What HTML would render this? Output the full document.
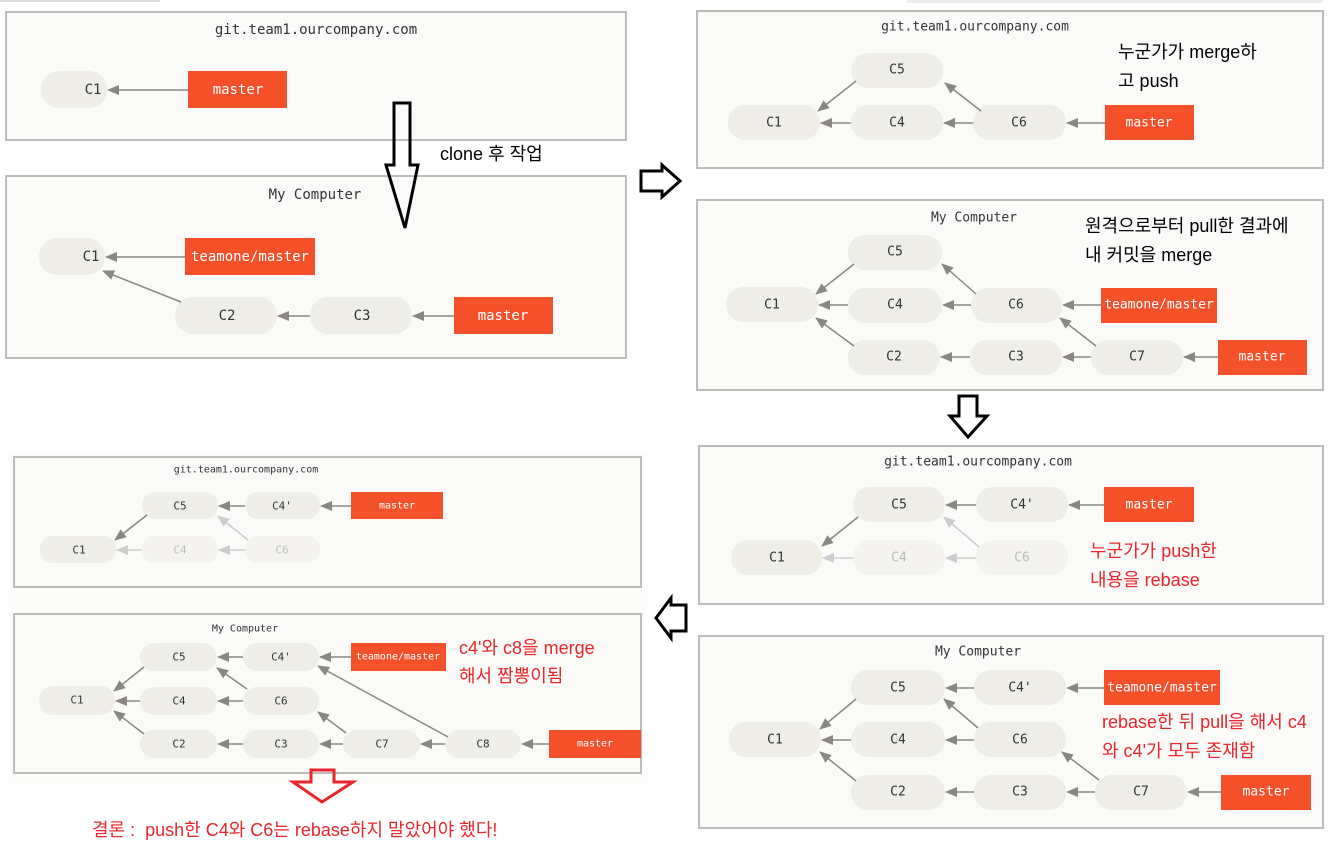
<!DOCTYPE html><html><head><meta charset="utf-8"><style>
html,body{margin:0;padding:0;background:#fff;width:1335px;height:860px;overflow:hidden}
svg{display:block}
.p{fill:#fafaf8;stroke:#bdbcb8;stroke-width:2}
.n{fill:#eeede7}
.f{fill:#f4f3ef}
.o{fill:#f4502a}
.t{font-family:"DejaVu Sans Mono","Liberation Mono",monospace;fill:#333;text-anchor:middle;dominant-baseline:central}
.w{font-family:"DejaVu Sans Mono","Liberation Mono",monospace;fill:#fff;text-anchor:middle;dominant-baseline:central}
.l{stroke:#8a8782;stroke-width:1.5;marker-end:url(#a)}
.lf{stroke:#ccc;stroke-width:1.5;marker-end:url(#b)}
.k{font-family:"Liberation Sans","Noto Sans CJK KR",sans-serif;font-size:18px;white-space:pre}
</style></head><body>
<svg width="1335" height="860" xmlns="http://www.w3.org/2000/svg">
<defs>
<marker id="a" markerUnits="userSpaceOnUse" markerWidth="12" markerHeight="10" refX="11" refY="5" orient="auto"><path d="M0,0 L12,5 L0,10 Z" fill="#8a8782"/></marker>
<marker id="b" markerUnits="userSpaceOnUse" markerWidth="12" markerHeight="10" refX="11" refY="5" orient="auto"><path d="M0,0 L12,5 L0,10 Z" fill="#ccc"/></marker>
</defs>
<rect x="0" y="0" width="160" height="2" fill="#ddd"/>
<rect x="907" y="0" width="416" height="3" fill="#eee"/>

<!-- P1 -->
<rect class="p" x="6" y="12" width="620" height="128"/>
<text class="t" x="316" y="30" font-size="14">git.team1.ourcompany.com</text>
<rect class="n" x="41" y="71" width="66" height="37" rx="18"/><text class="t" x="93" y="90" font-size="14">C1</text>
<rect class="o" x="188" y="71" width="99" height="37"/><text class="w" x="238" y="90" font-size="14">master</text>
<line class="l" x1="188" y1="90" x2="108" y2="90"/>

<!-- P2 -->
<rect class="p" x="6" y="176" width="620" height="182"/>
<text class="t" x="315" y="195" font-size="14">My Computer</text>
<rect class="n" x="39" y="238" width="66" height="37" rx="18"/><text class="t" x="91" y="257" font-size="14">C1</text>
<rect class="o" x="185" y="238" width="130" height="37"/><text class="w" x="250" y="257" font-size="14">teamone/master</text>
<rect class="n" x="175" y="297" width="102" height="37" rx="18"/><text class="t" x="227" y="316" font-size="14">C2</text>
<rect class="n" x="310" y="297" width="102" height="37" rx="18"/><text class="t" x="362" y="316" font-size="14">C3</text>
<rect class="o" x="454" y="297" width="99" height="37"/><text class="w" x="503" y="316" font-size="14">master</text>
<line class="l" x1="185" y1="257" x2="106" y2="257"/>
<line class="l" x1="181" y1="302" x2="103" y2="271"/>
<line class="l" x1="310" y1="316" x2="278" y2="316"/>
<line class="l" x1="454" y1="316" x2="413" y2="316"/>

<!-- big down arrow -->
<path d="M394,103 L410,103 L410,165 L418,165 L405,228 L386,165 L394,165 Z" fill="none" stroke="#000" stroke-width="3"/>
<text class="k" x="440" y="160" fill="#000" font-size="16">clone 후 작업</text>
<!-- right arrow -->
<path d="M641,171 L662,171 L662,165 L680,181 L662,197 L662,191 L641,191 Z" fill="none" stroke="#000" stroke-width="3"/>

<!-- P3 -->
<rect class="p" x="697" y="11" width="626" height="157"/>
<text class="t" x="975" y="27" font-size="13">git.team1.ourcompany.com</text>
<rect class="n" x="851" y="53" width="92" height="35" rx="17"/><text class="t" x="897" y="70" font-size="13">C5</text>
<rect class="n" x="728" y="105" width="92" height="35" rx="17"/><text class="t" x="774" y="123" font-size="13">C1</text>
<rect class="n" x="851" y="105" width="92" height="35" rx="17"/><text class="t" x="897" y="123" font-size="13">C4</text>
<rect class="n" x="973" y="105" width="93" height="35" rx="17"/><text class="t" x="1019" y="123" font-size="13">C6</text>
<rect class="o" x="1105" y="105" width="89" height="35"/><text class="w" x="1149" y="123" font-size="13">master</text>
<line class="l" x1="856" y1="81" x2="818" y2="111"/>
<line class="l" x1="851" y1="123" x2="821" y2="123"/>
<line class="l" x1="973" y1="123" x2="944" y2="123"/>
<line class="l" x1="981" y1="111" x2="945" y2="83"/>
<line class="l" x1="1105" y1="123" x2="1067" y2="123"/>
<text class="k" x="1118" y="58" fill="#000">누군가가 merge하</text>
<text class="k" x="1118" y="87" fill="#000">고 push</text>

<!-- P4 -->
<rect class="p" x="697" y="200" width="626" height="190"/>
<text class="t" x="974" y="218" font-size="13">My Computer</text>
<rect class="n" x="848" y="235" width="94" height="35" rx="17"/><text class="t" x="895" y="252" font-size="13">C5</text>
<rect class="n" x="726" y="287" width="92" height="35" rx="17"/><text class="t" x="772" y="305" font-size="13">C1</text>
<rect class="n" x="848" y="288" width="94" height="35" rx="17"/><text class="t" x="895" y="305" font-size="13">C4</text>
<rect class="n" x="971" y="288" width="91" height="35" rx="17"/><text class="t" x="1016" y="305" font-size="13">C6</text>
<rect class="o" x="1101" y="288" width="116" height="35"/><text class="w" x="1159" y="305" font-size="13">teamone/master</text>
<rect class="n" x="848" y="340" width="92" height="35" rx="17"/><text class="t" x="894" y="357" font-size="13">C2</text>
<rect class="n" x="970" y="340" width="92" height="35" rx="17"/><text class="t" x="1016" y="357" font-size="13">C3</text>
<rect class="n" x="1091" y="340" width="92" height="35" rx="17"/><text class="t" x="1137" y="357" font-size="13">C7</text>
<rect class="o" x="1218" y="340" width="89" height="35"/><text class="w" x="1262" y="357" font-size="13">master</text>
<line class="l" x1="854" y1="264" x2="816" y2="294"/>
<line class="l" x1="848" y1="305" x2="819" y2="305"/>
<line class="l" x1="854" y1="346" x2="816" y2="318"/>
<line class="l" x1="971" y1="305" x2="943" y2="305"/>
<line class="l" x1="976" y1="294" x2="942" y2="264"/>
<line class="l" x1="1101" y1="305" x2="1063" y2="305"/>
<line class="l" x1="970" y1="357" x2="941" y2="357"/>
<line class="l" x1="1091" y1="357" x2="1063" y2="357"/>
<line class="l" x1="1096" y1="346" x2="1060" y2="318"/>
<line class="l" x1="1218" y1="357" x2="1184" y2="357"/>
<text class="k" x="1085" y="232" fill="#000">원격으로부터 pull한 결과에</text>
<text class="k" x="1085" y="261" fill="#000">내 커밋을 merge</text>

<!-- down arrow small -->
<path d="M959,396 L977,396 L977,416 L987,416 L968,437 L950,416 L959,416 Z" fill="none" stroke="#000" stroke-width="3"/>

<!-- P5 -->
<rect class="p" x="699" y="446" width="624" height="158"/>
<text class="t" x="978" y="462" font-size="13">git.team1.ourcompany.com</text>
<rect class="n" x="853" y="487" width="92" height="35" rx="17"/><text class="t" x="899" y="505" font-size="13">C5</text>
<rect class="n" x="976" y="487" width="92" height="35" rx="17"/><text class="t" x="1022" y="505" font-size="13">C4'</text>
<rect class="o" x="1104" y="487" width="90" height="35"/><text class="w" x="1149" y="505" font-size="13">master</text>
<rect class="n" x="731" y="540" width="91" height="35" rx="17"/><text class="t" x="777" y="558" font-size="13">C1</text>
<rect class="f" x="853" y="540" width="92" height="35" rx="17"/><text class="t" x="899" y="558" font-size="13" style="fill:#bbb">C4</text>
<rect class="f" x="976" y="540" width="92" height="35" rx="17"/><text class="t" x="1022" y="558" font-size="13" style="fill:#bbb">C6</text>
<line class="l" x1="858" y1="517" x2="822" y2="546"/>
<line class="l" x1="976" y1="505" x2="946" y2="505"/>
<line class="l" x1="1104" y1="505" x2="1069" y2="505"/>
<line class="lf" x1="853" y1="558" x2="823" y2="558"/>
<line class="lf" x1="976" y1="558" x2="946" y2="558"/>
<line class="lf" x1="979" y1="547" x2="944" y2="517"/>
<text class="k" x="1090" y="557" fill="#e8262b">누군가가 push한</text>
<text class="k" x="1090" y="586" fill="#e8262b">내용을 rebase</text>

<!-- P6 -->
<rect class="p" x="699" y="636" width="624" height="192"/>
<text class="t" x="978" y="652" font-size="13">My Computer</text>
<rect class="n" x="851" y="670" width="94" height="35" rx="17"/><text class="t" x="898" y="688" font-size="13">C5</text>
<rect class="n" x="974" y="670" width="92" height="35" rx="17"/><text class="t" x="1020" y="688" font-size="13">C4'</text>
<rect class="o" x="1104" y="670" width="116" height="35"/><text class="w" x="1162" y="688" font-size="13">teamone/master</text>
<rect class="n" x="729" y="722" width="92" height="35" rx="17"/><text class="t" x="775" y="740" font-size="13">C1</text>
<rect class="n" x="851" y="722" width="94" height="35" rx="17"/><text class="t" x="898" y="740" font-size="13">C4</text>
<rect class="n" x="974" y="722" width="92" height="35" rx="17"/><text class="t" x="1020" y="740" font-size="13">C6</text>
<rect class="n" x="851" y="775" width="94" height="35" rx="17"/><text class="t" x="898" y="792" font-size="13">C2</text>
<rect class="n" x="974" y="775" width="92" height="35" rx="17"/><text class="t" x="1020" y="792" font-size="13">C3</text>
<rect class="n" x="1095" y="775" width="92" height="35" rx="17"/><text class="t" x="1141" y="792" font-size="13">C7</text>
<rect class="o" x="1221" y="775" width="90" height="35"/><text class="w" x="1266" y="792" font-size="13">master</text>
<line class="l" x1="856" y1="699" x2="820" y2="729"/>
<line class="l" x1="974" y1="688" x2="946" y2="688"/>
<line class="l" x1="1104" y1="688" x2="1067" y2="688"/>
<line class="l" x1="851" y1="740" x2="822" y2="740"/>
<line class="l" x1="974" y1="740" x2="946" y2="740"/>
<line class="l" x1="978" y1="728" x2="944" y2="699"/>
<line class="l" x1="856" y1="781" x2="820" y2="752"/>
<line class="l" x1="974" y1="792" x2="946" y2="792"/>
<line class="l" x1="1095" y1="792" x2="1067" y2="792"/>
<line class="l" x1="1099" y1="780" x2="1062" y2="752"/>
<line class="l" x1="1221" y1="792" x2="1188" y2="792"/>
<text class="k" x="1102" y="728" fill="#e8262b">rebase한 뒤 pull을 해서 c4</text>
<text class="k" x="1102" y="757" fill="#e8262b">와 c4'가 모두 존재함</text>

<!-- left arrow -->
<path d="M686,605 L671,605 L671,598 L656,618 L671,638 L671,631 L686,631 Z" fill="none" stroke="#000" stroke-width="3"/>

<!-- bottom left backdrop -->
<rect x="8" y="450" width="640" height="335" fill="#fcfcfb"/>
<!-- P7 -->
<rect class="p" x="14" y="457" width="627" height="130"/>
<text class="t" x="246" y="470" font-size="10">git.team1.ourcompany.com</text>
<rect class="n" x="142" y="492" width="76" height="27" rx="13"/><text class="t" x="180" y="506" font-size="11">C5</text>
<rect class="n" x="245" y="492" width="75" height="27" rx="13"/><text class="t" x="282" y="506" font-size="11">C4'</text>
<rect class="o" x="351" y="492" width="92" height="27"/><text class="w" x="397" y="506" font-size="10">master</text>
<rect class="n" x="40" y="536" width="76" height="27" rx="13"/><text class="t" x="79" y="550" font-size="11">C1</text>
<rect class="f" x="142" y="536" width="76" height="27" rx="13"/><text class="t" x="180" y="550" font-size="11" style="fill:#bbb">C4</text>
<rect class="f" x="245" y="536" width="75" height="27" rx="13"/><text class="t" x="282" y="550" font-size="11" style="fill:#bbb">C6</text>
<line class="l" x1="147" y1="515" x2="115" y2="540"/>
<line class="l" x1="245" y1="506" x2="219" y2="506"/>
<line class="l" x1="351" y1="506" x2="321" y2="506"/>
<line class="lf" x1="142" y1="550" x2="117" y2="550"/>
<line class="lf" x1="245" y1="550" x2="219" y2="550"/>
<line class="lf" x1="248" y1="540" x2="218" y2="516"/>

<!-- P8 -->
<rect class="p" x="14" y="614" width="627" height="159"/>
<text class="t" x="245" y="629" font-size="10">My Computer</text>
<rect class="n" x="140" y="643" width="77" height="28" rx="14"/><text class="t" x="179" y="657" font-size="11">C5</text>
<rect class="n" x="243" y="643" width="76" height="28" rx="14"/><text class="t" x="281" y="657" font-size="11">C4'</text>
<rect class="o" x="351" y="643" width="95" height="28"/><text class="w" x="398" y="657" font-size="10">teamone/master</text>
<rect class="n" x="39" y="686" width="76" height="29" rx="14"/><text class="t" x="77" y="700" font-size="11">C1</text>
<rect class="n" x="140" y="687" width="77" height="28" rx="14"/><text class="t" x="179" y="701" font-size="11">C4</text>
<rect class="n" x="243" y="687" width="76" height="28" rx="14"/><text class="t" x="281" y="701" font-size="11">C6</text>
<rect class="n" x="140" y="730" width="77" height="28" rx="14"/><text class="t" x="179" y="744" font-size="11">C2</text>
<rect class="n" x="243" y="730" width="76" height="28" rx="14"/><text class="t" x="281" y="744" font-size="11">C3</text>
<rect class="n" x="343" y="730" width="77" height="28" rx="14"/><text class="t" x="382" y="744" font-size="11">C7</text>
<rect class="n" x="445" y="730" width="76" height="28" rx="14"/><text class="t" x="483" y="744" font-size="11">C8</text>
<rect class="o" x="549" y="730" width="92" height="28"/><text class="w" x="595" y="744" font-size="10">master</text>
<line class="l" x1="144" y1="667" x2="114" y2="691"/>
<line class="l" x1="243" y1="657" x2="218" y2="657"/>
<line class="l" x1="351" y1="657" x2="320" y2="657"/>
<line class="l" x1="140" y1="701" x2="116" y2="701"/>
<line class="l" x1="243" y1="701" x2="218" y2="701"/>
<line class="l" x1="247" y1="689" x2="217" y2="668"/>
<line class="l" x1="144" y1="734" x2="114" y2="711"/>
<line class="l" x1="243" y1="744" x2="218" y2="744"/>
<line class="l" x1="343" y1="744" x2="320" y2="744"/>
<line class="l" x1="346" y1="733" x2="318" y2="712"/>
<line class="l" x1="445" y1="744" x2="421" y2="744"/>
<line class="l" x1="448" y1="737" x2="318" y2="666"/>
<line class="l" x1="549" y1="744" x2="522" y2="744"/>
<text class="k" x="459" y="654" fill="#e8262b" font-size="16.5">c4'와 c8을 merge</text>
<text class="k" x="459" y="682" fill="#e8262b" font-size="16.5">해서 짬뽕이됨</text>

<!-- red arrow -->
<path d="M311,770 L334,770 L334,782 L353,782 L322,802 L293,782 L311,782 Z" fill="none" stroke="#e8262b" stroke-width="3"/>
<text class="k" x="92" y="836" fill="#e8262b" font-size="17">결론 :  push한 C4와 C6는 rebase하지 말았어야 했다!</text>
</svg>
</body></html>
